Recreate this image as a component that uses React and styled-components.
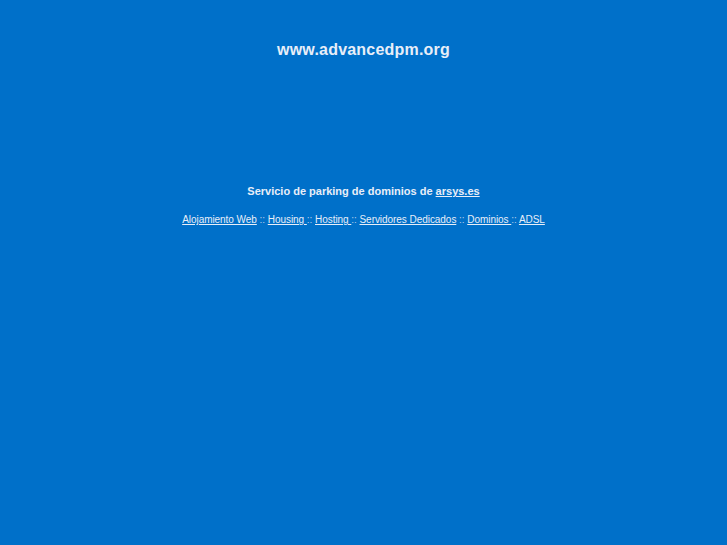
import styled, { createGlobalStyle } from 'styled-components'

const GlobalStyle = createGlobalStyle`
  html, body {
    margin: 0;
    padding: 0;
    background: #0070c9;
    height: 100%;
  }
  #root {
    min-height: 100%;
  }
`

const Page = styled.div`
  min-height: 545px;
  background: #0070c9;
  color: #e8eef8;
  font-family: "Liberation Sans", Arial, sans-serif;
  text-align: center;
  padding-top: 40px;
  box-sizing: border-box;
`

const Title = styled.h1`
  margin: 0;
  font-size: 16px;
  font-weight: bold;
  line-height: 20px;
  letter-spacing: 0.2px;
  color: #e8eef8;
`

const Notice = styled.p`
  margin: 124px 0 0;
  font-size: 11px;
  font-weight: bold;
  line-height: 14px;
`

const LinkRow = styled.p`
  margin: 15px 0 0;
  font-size: 10px;
  line-height: 14px;
  letter-spacing: -0.05px;
  color: #b8cce8;
`

const Link = styled.a`
  color: #e8eef8;
  text-decoration: underline;
`

const links = [
  'Alojamiento Web',
  'Housing ',
  'Hosting ',
  'Servidores Dedicados',
  'Dominios ',
  'ADSL'
]

export default function App () {
  return (
    <>
      <GlobalStyle />
      <Page>
        <Title>www.advancedpm.org</Title>
        <Notice>
          Servicio de parking de dominios de <Link href='#'>arsys.es </Link>
        </Notice>
        <LinkRow>
          {links.map((label, i) => (
            <span key={label}>
              {i > 0 && ' :: '}
              <Link href='#'>{label}</Link>
            </span>
          ))}
        </LinkRow>
      </Page>
    </>
  )
}
